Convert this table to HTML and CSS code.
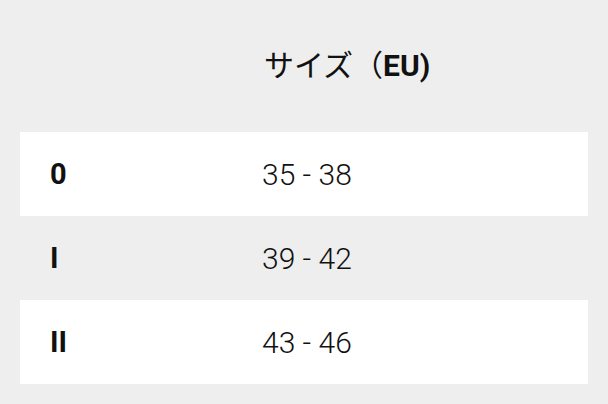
FILE: index.html
```html
<!DOCTYPE html>
<html lang="ja">
<head>
<meta charset="utf-8">
<link rel="stylesheet" href="styles.css">
</head>
<body>
<div class="table">
  <div class="row head">
    <div class="cell label"></div>
    <div class="cell value">サイズ（<b>EU)</b></div>
  </div>
  <div class="row light">
    <div class="cell label">0</div>
    <div class="cell value">35 - 38</div>
  </div>
  <div class="row">
    <div class="cell label">I</div>
    <div class="cell value">39 - 42</div>
  </div>
  <div class="row light">
    <div class="cell label">II</div>
    <div class="cell value">43 - 46</div>
  </div>
</div>
</body>
</html>
```
FILE: styles.css
```css
html, body {
  margin: 0;
  padding: 0;
  background: #eeeeee;
}
body {
  font-family: Roboto, "Noto Sans CJK JP", sans-serif;
  color: #111;
  width: 608px;
  height: 404px;
  overflow: hidden;
}
.table {
  padding: 0 20px;
  display: flex;
  flex-direction: column;
}
.row {
  display: grid;
  grid-template-columns: 242px 1fr;
  height: 84px;
  align-items: center;
  font-size: 30px;
}
.row.head {
  height: 132px;
}
.light {
  background: #ffffff;
}
.label {
  padding-left: 30px;
  font-weight: 700;
  font-size: 29px;
}
.value {
  font-weight: 300;
}
.head .value {
  font-weight: 400;
  font-size: 30px;
  line-height: 1;
  padding-left: 2px;
  padding-bottom: 0;
}
.head .value b {
  font-weight: 700;
}
```
